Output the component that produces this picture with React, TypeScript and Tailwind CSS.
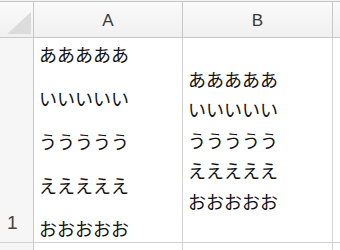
import React from "react";

const jp = { fontFamily: '"Noto Sans CJK JP", "Noto Sans", sans-serif' };
const lat = { fontFamily: '"Liberation Sans", Arial, sans-serif' };

export default function App() {
  const hdr = "bg-gradient-to-b from-[#fafafa] to-[#f0f0f0]";
  return (
    <div className="w-[340px] h-[250px] bg-white flex flex-col overflow-hidden">
      <div className="h-[1px] bg-[#f4f4f4]" />
      <div className="h-[1px] bg-[#c4c4c4]" />
      {/* header */}
      <div className={`h-[36px] flex border-b border-[#c8c8c8] ${hdr}`}>
        <div className="w-[34px] border-r border-[#c8c8c8] flex items-end justify-start pl-[7px] pb-[3px]">
          <svg width="24" height="22" viewBox="0 0 24 22">
            <polygon points="0,22 24,22 24,0" fill="#dcdcdc" />
          </svg>
        </div>
        <div className="w-[149px] border-r border-[#c8c8c8] flex items-center justify-center text-[17px] text-[#3a3a3a] pt-[2px]" style={lat}>
          A
        </div>
        <div className="w-[150px] border-r border-[#c8c8c8] flex items-center justify-center text-[17px] text-[#3a3a3a] pt-[2px]" style={lat}>
          B
        </div>
        <div className="flex-1" />
      </div>
      {/* body row */}
      <div className="h-[205px] flex border-b border-[#d0d0d0]">
        <div className="w-[34px] border-r border-[#c8c8c8] bg-[#f6f6f6] flex items-end pl-[7px] pb-[5px] text-[19px] text-[#444]" style={lat}>
          1
        </div>
        <div className="w-[149px] border-r border-[#d4d4d4] flex flex-col justify-between pl-[5px] pt-[5px] pb-[3px] text-[18px] leading-[22px] text-[#111]" style={jp}>
          <div>あああああ</div>
          <div>いいいいい</div>
          <div>ううううう</div>
          <div>えええええ</div>
          <div>おおおおお</div>
        </div>
        <div className="w-[150px] border-r border-[#d4d4d4] flex flex-col justify-center pl-[5px] text-[18px] leading-[30.5px] text-[#111]" style={jp}>
          <div>あああああ</div>
          <div>いいいいい</div>
          <div>ううううう</div>
          <div>えええええ</div>
          <div>おおおおお</div>
        </div>
        <div className="flex-1" />
      </div>
      <div className="flex-1 flex">
        <div className="w-[34px] border-r border-[#c8c8c8] bg-[#f6f6f6]" />
        <div className="w-[149px] border-r border-[#d4d4d4]" />
        <div className="w-[150px] border-r border-[#d4d4d4]" />
      </div>
    </div>
  );
}
